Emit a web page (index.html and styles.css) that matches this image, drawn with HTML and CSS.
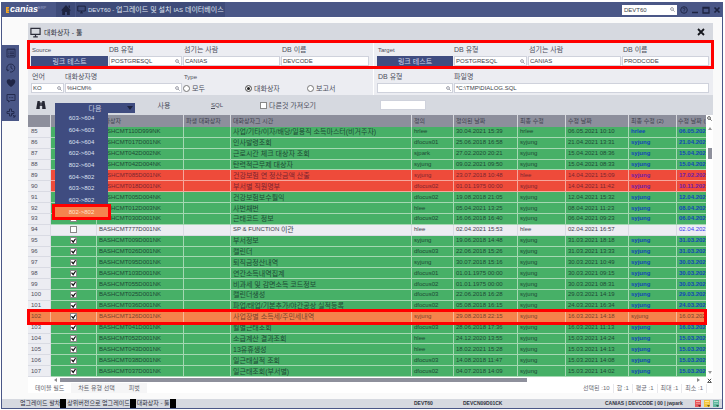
FILE: index.html
```html
<!DOCTYPE html>
<html lang="ko">
<head>
<meta charset="utf-8">
<title>DEVT60</title>
<link rel="stylesheet" href="styles.css">
</head>
<body>
<div class="window">
  <header class="appbar">
    <div class="logo"><svg class="logo-mark" viewBox="0 0 4 6"><path fill="#f5a623" d="M0 0h3v1.500H1.500v1H3V4H1.500v.600H3V6H0z"/></svg><b>canias</b><small>ERP</small></div>
    <div class="home"><svg viewBox="0 0 12 12"><path d="M6 1 1 6.500h1.200V11h2.800V8h2v3h2.800V6.500H11z" fill="#1d2340"/><path d="M8.500 1.500h1.500v3l-1.500-1.500z" fill="#1d2340"/></svg></div>
    <div class="apptab"><svg viewBox="0 0 12 12"><path d="M1 1.500h10v6.500H1zM4 10.500h4M6 8v2.500" fill="none" stroke="#1d2340" stroke-width="1.300"/></svg><span><span class="latin">DEVT60 - </span>업그레이드 및 설치 <span class="latin">IAS</span> 데이터베이스</span></div>
    <div class="spacer"></div>
    <div class="field top-search"><input value="DEVT60" aria-label="검색"><svg class="mag" viewBox="0 0 6 6"><circle cx="2.400" cy="2.400" r="1.700"/><path d="m3.700 3.700 1.900 1.900"/></svg></div>
    <div class="winbtns">
      <svg viewBox="0 0 8 8"><circle cx="4" cy="4" r="3.300" fill="none" stroke="#232a4b"/><path d="M2.900 3.200Q3 2 4 2t1.100 1.100Q5 3.800 4 4.300V5M4 5.500v.800" fill="none" stroke="#232a4b" stroke-width=".9"/></svg>
      <svg viewBox="0 0 8 8"><path d="M1 6.500h6" stroke="#1d2340" stroke-width="1.500"/></svg>
      <svg viewBox="0 0 8 8"><path d="M1 1.500h6v5.500H1zM1 2h6" fill="none" stroke="#1d2340" stroke-width="1.300"/></svg>
      <svg viewBox="0 0 8 8"><path d="m1.500 1.500 5 5m0-5-5 5" stroke="#1d2340" stroke-width="1.700"/></svg>
    </div>
  </header>
  <div class="workspace">
    <nav class="side">
      <svg viewBox="0 0 10 10"><path d="M1 1h8v8H1z" fill="none" stroke="#252c50"/><path d="M1 1.700h8M3.500 4H8M3.500 5.700H8M3.500 7.400H8M2 4h.700M2 5.700h.700M2 7.400h.700" stroke="#252c50"/></svg>
      <svg viewBox="0 0 10 10"><path d="M1.600 7.500A4 4 0 1 1 4 9" fill="none" stroke="#252c50"/><path d="M5 2.500V5l1.800 1.200M.5 6l1.100 2 1.600-1.300" fill="none" stroke="#252c50"/></svg>
      <svg viewBox="0 0 10 10"><path d="M5 9C2 6.700.7 5.200.7 3.400.7 1.200 3.700.4 5 2.600 6.300.4 9.300 1.200 9.300 3.400 9.300 5.200 8 6.700 5 9z" fill="#1f2546"/></svg>
      <svg viewBox="0 0 10 10"><path d="M1 1.500h8v6H4.500L2.500 9V7.500H1z" fill="none" stroke="#252c50"/><path d="M3 4.600h.900m.700 0h.900m.700 0h.900" stroke="#252c50"/></svg>
      <svg viewBox="0 0 10 10"><path d="M3.500 1v2.500H1v2h2.500V8h2V5.500H8v-2H5.500V1z" fill="none" stroke="#252c50"/><path d="m6.500 6.500 2.500 2.500M7 9h2V7" fill="none" stroke="#252c50"/></svg>
    </nav>
    <main class="panel">
      <div class="titlebar"><svg class="monitor" viewBox="0 0 12 12"><path d="M1 1.500h10v6.500H1zM3.500 10.800h5M6 8v2.500" fill="none" stroke="#2b2d3a" stroke-width="1.300"/></svg><h1>대화상자 - 툴</h1><button class="close" aria-label="닫기"><svg viewBox="0 0 8 8"><path d="m1 1 6 6m0-6-6 6" stroke="#15161c" stroke-width="1.800"/></svg></button></div>
      <section class="connections">
        <div class="half conn">
          <div class="cell"><span class="label latin">Source</span><button class="link">링크 테스트</button></div>
          <div class="cell"><label for="s1">DB 유형</label><div class="field"><input id="s1" value="POSTGRESQL"><svg class="mag" viewBox="0 0 6 6"><circle cx="2.400" cy="2.400" r="1.700"/><path d="m3.700 3.700 1.900 1.900"/></svg></div></div>
          <div class="cell"><label for="s2">섬기는 사람</label><div class="field"><input id="s2" value="CANIAS"></div></div>
          <div class="cell"><label for="s3">DB 이름</label><div class="field"><input id="s3" value="DEVCODE"></div></div>
        </div>
        <div class="half conn">
          <div class="cell"><span class="label latin">Target</span><button class="link">링크 테스트</button></div>
          <div class="cell"><label for="t1">DB 유형</label><div class="field"><input id="t1" value="POSTGRESQL"><svg class="mag" viewBox="0 0 6 6"><circle cx="2.400" cy="2.400" r="1.700"/><path d="m3.700 3.700 1.900 1.900"/></svg></div></div>
          <div class="cell"><label for="t2">섬기는 사람</label><div class="field"><input id="t2" value="CANIAS"></div></div>
          <div class="cell"><label for="t3">DB 이름</label><div class="field"><input id="t3" value="PRODCODE"></div></div>
        </div>
      </section>
      <section class="filters">
        <div class="half filter">
          <div class="cell"><label for="f1">언어</label><div class="field"><input id="f1" value="KO"><svg class="mag" viewBox="0 0 6 6"><circle cx="2.400" cy="2.400" r="1.700"/><path d="m3.700 3.700 1.900 1.900"/></svg></div></div>
          <div class="cell"><label for="f2">대화상자명</label><div class="field"><input id="f2" value="%HCM%"><svg class="mag" viewBox="0 0 6 6"><circle cx="2.400" cy="2.400" r="1.700"/><path d="m3.700 3.700 1.900 1.900"/></svg></div></div>
          <div class="cell"><span class="label latin">Type</span><div class="radios"><label><input type="radio" name="type">모두</label><label><input type="radio" name="type" checked>대화상자</label><label><input type="radio" name="type">보고서</label></div></div>
        </div>
        <div class="half file">
          <div class="cell"><label for="g1">DB 유형</label><div class="field"><input id="g1" value=""><svg class="mag" viewBox="0 0 6 6"><circle cx="2.400" cy="2.400" r="1.700"/><path d="m3.700 3.700 1.900 1.900"/></svg></div></div>
          <div class="cell"><label for="g2">파일명</label><div class="field"><input id="g2" value="*C:\TMP\DIALOG.SQL"></div></div>
        </div>
      </section>
      <div class="toolbar">
        <svg class="bino" viewBox="0 0 10 10"><path d="M1.500 1h2.300v1.500h2.400V1h2.300l1.300 8H6.200V6H3.800v3H.2z" fill="#252733"/><path d="M5 2.500V6" stroke="#9a9ca8" stroke-width=".6"/></svg>
        <div class="dropdown">
          <button class="next">다음<i></i></button>
          <ul class="menu">
            <li>603-&gt;604</li><li>604-&gt;603</li><li>604-&gt;604</li><li>602-&gt;604</li><li>802-&gt;604</li><li>604-&gt;802</li><li>603-&gt;802</li><li>602-&gt;802</li><li class="active">802-&gt;802</li>
          </ul>
        </div>
        <button class="tool use">사용</button>
        <button class="tool sql"><u>S</u>QL</button>
        <label class="import"><input type="checkbox" class="tick">다른것 가져오기</label>
        <div class="field tool-input"><input aria-label="값" value=""></div>
      </div>
      <div class="gridwrap">
        <table>
          <thead><tr><th></th><th></th><th>대화상자</th><th>파생 대화상자</th><th>대화상자그 시간</th><th>정의</th><th>정의된 날짜</th><th>최종 수정</th><th>수정 날짜</th><th>최종 수정 (2)</th><th>수정 날짜 (</th></tr></thead>
          <tbody>
            <tr><td>85</td><td></td><td>BASHCMT110D999NK</td><td></td><td>사업/기타/이자/배당/일용직 소득마스터(비거주자)</td><td>hrlee</td><td>30.04.2021 15:39</td><td>hrlee</td><td>06.05.2021 10:10</td><td>hrlee</td><td>06.05.202</td></tr>
            <tr><td>86</td><td></td><td>BASHCMT017D001NK</td><td></td><td>인사발령조회</td><td>dfocus01</td><td>25.06.2018 16:58</td><td>syjung</td><td>21.04.2021 13:31</td><td>syjung</td><td>21.04.202</td></tr>
            <tr><td>87</td><td></td><td>BASHCMT042D002NK</td><td></td><td>근로시간 체크 대상자 조회</td><td>sjpark</td><td>27.02.2020 20:21</td><td>syjung</td><td>15.04.2021 08:36</td><td>syjung</td><td>15.04.202</td></tr>
            <tr><td>88</td><td></td><td>BASHCMT042D004NK</td><td></td><td>탄력적근무제 대상자</td><td>syjung</td><td>09.02.2021 09:50</td><td>syjung</td><td>15.04.2021 08:33</td><td>syjung</td><td>15.04.202</td></tr>
            <tr class="red"><td>89</td><td></td><td>BASHCMT085D001NK</td><td></td><td>건강보험 연 정산금액 산출</td><td>syjung</td><td>23.07.2018 10:48</td><td>hlee</td><td>14.04.2021 15:09</td><td>syjung</td><td>17.02.202</td></tr>
            <tr class="red"><td>90</td><td></td><td>BASHCMT018D001NK</td><td></td><td>부서별 직원명부</td><td>dfocus02</td><td>01.01.1975 00:00</td><td>syjung</td><td>14.04.2021 11:42</td><td>syjung</td><td>10.11.202</td></tr>
            <tr><td>91</td><td></td><td>BASHCMT005D004NK</td><td></td><td>건강보험보수월익</td><td>dfocus02</td><td>19.08.2018 21:05</td><td>syjung</td><td>12.04.2021 15:32</td><td>syjung</td><td>12.04.202</td></tr>
            <tr><td>92</td><td></td><td>BASHCMT012D003NK</td><td></td><td>사번채번</td><td>hlee</td><td>05.04.2021 13:25</td><td>syjung</td><td>08.04.2021 11:23</td><td>syjung</td><td>08.04.202</td></tr>
            <tr><td>93</td><td><input type="checkbox" class="tick" aria-label="93"></td><td>BASHCMT030D001NK</td><td></td><td>근태코드 정보</td><td>dfocus02</td><td>16.06.2018 16:40</td><td>syjung</td><td>06.04.2021 09:23</td><td>syjung</td><td>06.04.202</td></tr>
            <tr class="plain"><td>94</td><td><input type="checkbox" class="tick" aria-label="94"></td><td>BASHCMT777D001NK</td><td></td><td><span class="latin">SP &amp; FUNCTION&nbsp;</span>이관</td><td>hlee</td><td>02.04.2021 15:53</td><td>hlee</td><td>02.04.2021 16:57</td><td></td><td>02.04.202</td></tr>
            <tr><td>95</td><td><input type="checkbox" class="tick" aria-label="95" checked></td><td>BASHCMT009D001NK</td><td></td><td>부서정보</td><td>syjung</td><td>19.06.2018 14:48</td><td>syjung</td><td>31.03.2021 18:18</td><td>syjung</td><td>31.03.202</td></tr>
            <tr><td>96</td><td><input type="checkbox" class="tick" aria-label="96" checked></td><td>BASHCMT026D001NK</td><td></td><td>캘린더</td><td>dfocus03</td><td>22.06.2018 15:26</td><td>syjung</td><td>31.03.2021 13:33</td><td>syjung</td><td>31.03.202</td></tr>
            <tr><td>97</td><td><input type="checkbox" class="tick" aria-label="97" checked></td><td>BASHCMT095D001NK</td><td></td><td>퇴직금정산내역</td><td>syjung</td><td>30.07.2018 15:16</td><td>syjung</td><td>30.03.2021 10:49</td><td>syjung</td><td>30.03.202</td></tr>
            <tr><td>98</td><td><input type="checkbox" class="tick" aria-label="98" checked></td><td>BASHCMT103D001NK</td><td></td><td>연간소득내역집계</td><td>dfocus01</td><td>01.01.1975 00:00</td><td>syjung</td><td>30.03.2021 09:15</td><td>syjung</td><td>30.03.202</td></tr>
            <tr><td>99</td><td><input type="checkbox" class="tick" aria-label="99" checked></td><td>BASHCMT055D001NK</td><td></td><td>비과세 및 감면소득 코드정보</td><td>dfocus02</td><td>01.01.1975 00:00</td><td>syjung</td><td>30.03.2021 08:31</td><td>syjung</td><td>30.03.202</td></tr>
            <tr><td>100</td><td><input type="checkbox" class="tick" aria-label="100" checked></td><td>BASHCMT025D001NK</td><td></td><td>캘린더생성</td><td>dfocus03</td><td>22.06.2018 16:28</td><td>syjung</td><td>29.03.2021 14:19</td><td>syjung</td><td>29.03.202</td></tr>
            <tr><td>101</td><td><input type="checkbox" class="tick" aria-label="101" checked></td><td>BASHCMT036D001NK</td><td></td><td>파업/태업/기본추가/야간공상 실적등록</td><td>dfocus02</td><td>05.08.2018 16:15</td><td>syjung</td><td>24.03.2021 16:34</td><td>syjung</td><td>24.03.202</td></tr>
            <tr class="current"><td>102</td><td><input type="checkbox" class="tick" aria-label="102" checked></td><td>BASHCMT126D001NK</td><td></td><td>사업장별 소득세/주민세내역</td><td>syjung</td><td>29.08.2018 22:15</td><td>syjung</td><td>16.03.2021 14:18</td><td>syjung</td><td>16.03.202</td></tr>
            <tr><td>103</td><td><input type="checkbox" class="tick" aria-label="103" checked></td><td>BASHCMT041D001NK</td><td></td><td>월별근태조회</td><td>dfocus03</td><td>28.06.2018 17:36</td><td>syjung</td><td>16.03.2021 11:13</td><td>syjung</td><td>16.03.202</td></tr>
            <tr><td>104</td><td><input type="checkbox" class="tick" aria-label="104" checked></td><td>BASHCMT052D001NK</td><td></td><td>소급계산 결과조회</td><td>hlee</td><td>24.12.2020 13:55</td><td>syjung</td><td>15.03.2021 14:24</td><td>syjung</td><td>15.03.202</td></tr>
            <tr><td>105</td><td><input type="checkbox" class="tick" aria-label="105" checked></td><td>BASHCMT043D001NK</td><td></td><td>13유휴생성</td><td>hlee</td><td>18.02.2021 15:28</td><td>syjung</td><td>15.03.2021 14:13</td><td>syjung</td><td>15.03.202</td></tr>
            <tr><td>106</td><td><input type="checkbox" class="tick" aria-label="106" checked></td><td>BASHCMT038D001NK</td><td></td><td>일근태실적 조회</td><td>dfocus03</td><td>14.08.2018 11:47</td><td>syjung</td><td>15.03.2021 14:08</td><td>syjung</td><td>15.03.202</td></tr>
            <tr><td>107</td><td><input type="checkbox" class="tick" aria-label="107" checked></td><td>BASHCMT037D001NK</td><td></td><td>일근태조회(부서별)</td><td>dfocus02</td><td>04.07.2018 14:09</td><td>syjung</td><td>15.03.2021 14:02</td><td>syjung</td><td>15.03.202</td></tr>
          </tbody>
        </table>
        <div class="vscroll">
          <svg class="mag dark" viewBox="0 0 6 6"><circle cx="2.400" cy="2.400" r="1.700"/><path d="m3.700 3.700 1.900 1.900"/></svg>
          <i class="up"></i><b></b><i class="down"></i>
        </div>
      </div>
      <div class="hscroll"><i class="left"></i><b></b><i class="right"></i><svg viewBox="0 0 6 6"><path d="m1 1 4 4m0-4L1 5M.5 5.500h5" stroke="#333" fill="none"/></svg></div>
      <div class="tabs">
        <button class="selected">테이블 필드</button><button>차트 유형 선택</button><button>피벗</button>
        <div class="stats"><span>선택된 :10</span><span>합 :1</span><span>평균 :1</span><span>최대 :1</span><span>최소 :1</span></div>
      </div>
    </main>
  </div>
  <footer class="status">
    <div class="crumbs"><span>업그레이드 팔차</span><i></i><span>상위버전으로 업그레이드</span><i></i><span>대화상자 - 툴</span><i></i></div>
    <span class="sys">DEVT60</span><span class="prog">DEVCN09D01CK</span><span class="user">CANIAS | DEVCODE | 00 | jwpark</span>
    <div class="lights"><svg viewBox="0 0 6 7"><path fill="#e8585c" d="M0 0h6v7H0z"/><path fill="#f6b0b0" d="M1 1h4v1H1zM1 3h4v.600H1z"/><path fill="#6a2530" d="M3 5h3L4.500 7z"/></svg><svg viewBox="0 0 6 7"><path fill="#f3c53c" d="M0 0h6v7H0z"/><path fill="#fbe59a" d="M1 1h4v1H1zM1 3h4v.600H1z"/><path fill="#6d5a20" d="M3 5h3L4.500 7z"/></svg><svg viewBox="0 0 6 7"><path fill="#62b8a0" d="M0 0h6v7H0z"/><path fill="#b5e0d4" d="M1 1h4v1H1zM1 3h4v.600H1z"/><path fill="#285a4c" d="M3 5h3L4.500 7z"/></svg></div>
  </footer>
</div>
</body>
</html>
```
FILE: styles.css
```css
* { box-sizing: border-box; }
body {
  margin: 0; height: 100vh; padding: 2px 2px 1px 1px; background: #fff;
  font: 7px/9px "Liberation Sans", "Noto Sans CJK KR", sans-serif; color: #4c4e5c;
}
button, input { font: inherit; color: inherit; margin: 0; padding: 0; border: 0; border-radius: 0; background: none; }
h1, ul { margin: 0; padding: 0; list-style: none; font: inherit; }
svg { display: block; flex: none; }
.latin { font-size: 6px; }
.spacer { flex: 1; }

.window { height: 100%; display: flex; flex-direction: column; border: 1px solid #4a5787; border-top: 0; background: #fafafa; }

.appbar { height: 15px; flex: none; display: flex; align-items: center; background: #4a5787; color: #dfe2ee; }
.logo { width: 54px; padding-left: 4px; display: flex; align-items: center; color: #fff; }
.logo-mark { width: 4px; height: 6px; }
.logo b { font-size: 9px; font-style: italic; }
.logo small { font-size: 4px; line-height: 4px; padding-bottom: 3px; color: #9aa3c8; }
.home { width: 19px; height: 100%; padding: 2px 3px; background: #3e4b79; }
.home svg, .apptab svg { width: 12px; height: 12px; }
.home svg { margin-left: 1px; }
.apptab { height: 100%; display: flex; align-items: center; gap: 2px; padding: 0 1px; margin-left: 1px; background: #3e4b79; white-space: nowrap; }
.apptab svg { width: 9px; height: 9px; }

.field { position: relative; display: flex; height: 10px; background: #fff; border: 1px solid #cfd2dc; }
.field input { width: 100%; min-width: 0; padding-left: 1px; font-size: 6px; line-height: 8px; outline: 0; color: #3d3f4c; }
.mag { width: 5px; height: 5px; fill: none; stroke: #8c8e9a; stroke-width: 1px; }
.mag.dark { stroke: #444; }
.field .mag { align-self: center; margin-right: 1px; }
.top-search { width: 55px; border-color: #fff; }
.winbtns { display: flex; gap: 3px; padding: 0 1px 0 3px; }
.winbtns svg { width: 8px; height: 8px; }

.workspace { flex: 1; min-height: 0; display: flex; padding: 5px 9px 6px 0; border-top: 1px solid #fff; }
.side { width: 17px; align-self: flex-start; margin: 22px 9px 0 0; padding: 3px 0; background: #4a5787; display: flex; flex-direction: column; align-items: center; gap: 5px; }
.side svg { width: 10px; height: 10px; }

.panel { flex: 1; min-width: 0; display: flex; flex-direction: column; background: #ecedf2; }
.titlebar { height: 18px; flex: none; display: flex; align-items: center; padding: 0 8px 0 2px; gap: 3px; background: #d6d9e0; color: #30323e; }
.titlebar h1 { flex: 1; }
.monitor { width: 11px; height: 11px; }
.close svg { width: 8px; height: 8px; }

.connections, .filters { display: grid; grid-template-columns: 345fr 340fr; flex: none; }
.connections { position: relative; height: 27px; border-bottom: 1px solid #dcdee5; }
.connections::after { content: ""; position: absolute; inset: -1px -1px -2px; border: 3px solid #f00; z-index: 2; }
.filters { height: 27px; }
.half { display: grid; gap: 1px; padding: 3px 4px 0 3px; }
.half + .half { border-left: 1px solid #fff; }
.conn { grid-template-columns: 77px 73px 97px minmax(0, 1fr); }
.half + .conn { grid-template-columns: 76px 73px 93px minmax(0, 1fr); }
.filter { grid-template-columns: 33px 117px minmax(0, 1fr); }
.file { grid-template-columns: 76px minmax(0, 1fr); }
.cell { display: flex; flex-direction: column; min-width: 0; }
.cell > label, .cell > .label { height: 12px; line-height: 12px; padding-left: 1px; white-space: nowrap; }
.cell:nth-child(2) > label { padding-left: 0; }
.link { height: 10px; background: #3f4c80; color: #d3d8ea; }
.radios { display: flex; height: 10px; align-items: center; }
.radios label { display: flex; align-items: center; gap: 2px; width: 62px; white-space: nowrap; }
.radios input { appearance: none; width: 7px; height: 7px; border: 1px solid #777; border-radius: 50%; background: #fff; }
.radios input:checked { background: #222; box-shadow: inset 0 0 0 1px #fff; }

.toolbar { height: 20px; flex: none; display: flex; align-items: center; background: #d6d9e0; white-space: nowrap; }
.bino { width: 10px; height: 10px; margin: 0 9px 0 8px; }
.dropdown { position: relative; width: 80px; height: 10px; align-self: flex-end; margin-bottom: 2px; }
.next { width: 100%; height: 10px; background: #3f4c80; color: #c6cce2; display: flex; align-items: center; justify-content: center; }
.next i { position: absolute; right: 2px; top: 3px; border: 3px solid transparent; border-top: 4px solid #1d2340; border-bottom: 0; }
.menu { position: absolute; left: 0; top: 10px; width: 53px; height: 105px; z-index: 3; display: grid; grid-auto-rows: 1fr; background: #3f4c80; color: #dde1f0; font-size: 6px; text-align: center; }
.menu li { display: grid; place-content: center; }
.menu .active { position: relative; background: #f5834e; color: #fde0cc; }
.menu .active::after { content: ""; position: absolute; inset: -2px -3px; border: 3px solid #f00; }
.use { width: 58px; }
.sql { width: 48px; font-size: 6px; }
.import { display: flex; align-items: center; gap: 2px; margin-left: 19px; width: 120px; }
.tool-input { width: 46px; }
.tick { appearance: none; flex: none; width: 7px; height: 7px; background: #fff; border: 1px solid #888; display: grid; place-content: center; }
.tick:checked::before { content: ""; width: 5px; height: 5px; background: #111; clip-path: polygon(0 45%, 20% 30%, 42% 55%, 85% 0, 100% 15%, 45% 100%); }

.gridwrap { flex: 1; min-height: 0; display: grid; grid-template-columns: minmax(0, 1fr) 7px; }
table { display: flex; flex-direction: column; min-width: 0; min-height: 0; }
thead { display: block; flex: none; }
tbody { display: grid; grid-auto-rows: minmax(0, 1fr); flex: 1; min-height: 0; }
tr { display: grid; grid-template-columns: 23px 46px 87px 47px minmax(0, 1fr) 42px 64px 48px 63px 48px 29px; }
th { height: 12px; padding: 1px 0 0 2px; background: #8d8f9c; color: #3f414e; border-right: 1px solid #d6d7dc; font-weight: 400; font-size: 6px; text-align: left; line-height: 10px; white-space: nowrap; overflow: hidden; }
th:last-child { padding-left: 1px; }
td { padding: 0 0 0 2px; display: flex; align-items: center; white-space: nowrap; overflow: hidden; background: #47b067; color: #1d4a35; border: solid #a5d8b2; border-width: 0 1px 1px 0; font-size: 6px; }
td:nth-child(5) { font-size: 7px; }
td:nth-child(1), .current td:nth-child(1) { padding-left: 3px; }
td:first-child { background: #ecedf2; color: #4c4e5c; border-color: #d9dbe3; }
td:nth-child(2) { justify-content: center; padding: 0; }
td:nth-child(10), td:nth-child(11) { color: #1046b8; font-weight: 700; }
td:last-child, th:last-child { border-right: 0; }
.red td:not(:first-child) { background: #ee4b3a; color: #7a2530; border-color: #f6a79c; }
.red td:nth-child(n+10) { color: #6d1ca8 !important; }
.plain td { background: #ecedf2; color: #3f414e; border-color: #d9dbe3; }
.plain td:nth-child(11) { color: #3a3af0; font-weight: 400; }
.current { position: relative; }
.current::after { content: ""; position: absolute; inset: -3px -1px -2px; border: 3px solid #f00; }
.current td, .current td:first-child { background: #f5834b; color: #7c402c; border-color: #f9b795; font-weight: 400; }

.vscroll { background: #fff; display: flex; flex-direction: column; align-items: center; }
.vscroll .mag { margin: 1px 0 6px; }
.up, .down, .left, .right { width: 0; height: 0; border: 2px solid transparent; }
.up { border-bottom: 3px solid #999; border-top: 0; }
.down { border-top: 3px solid #999; border-bottom: 0; margin: auto 0 3px; }
.vscroll b { width: 4px; height: 11px; margin-top: 18px; background: #8e909c; }
.hscroll { height: 6px; flex: none; display: flex; align-items: center; padding: 0 1px 0 26px; background: #fff; }
.left { border-right: 3px solid #888; border-left: 0; }
.right { border-left: 3px solid #888; border-right: 0; margin: 0 7px 0 auto; }
.hscroll b { width: 71%; height: 4px; margin-left: 3px; background: #8e909c; }
.hscroll svg { width: 5px; height: 5px; }
.tabs { height: 10px; flex: none; display: flex; align-items: center; background: #fff; }
.tabs button { height: 100%; padding: 0 7px; background: #f5f5f6; color: #5c5d68; font-size: 6px; }
.tabs .selected { background: #fff; }
.stats { flex: 1; display: flex; justify-content: flex-end; align-self: stretch; align-items: center; padding-right: 6px; color: #6a6b75; }
.stats span { padding: 0 3px; border-right: 1px solid #e8e8ec; font-size: 6px; }

.status { height: 9px; flex: none; display: grid; grid-template-columns: 412fr 49fr 142fr 90fr 27px; align-items: center; background: #d6d9e0; color: #30323e; font-size: 5px; font-weight: 700; white-space: nowrap; }
.crumbs { display: flex; align-items: center; padding-left: 18px; font-size: 6px; font-weight: 400; }
.crumbs i { width: 6px; height: 9px; margin-right: 1px; background: #000; }
.lights { display: flex; gap: 3px; }
.lights svg { width: 6px; height: 7px; }
```
